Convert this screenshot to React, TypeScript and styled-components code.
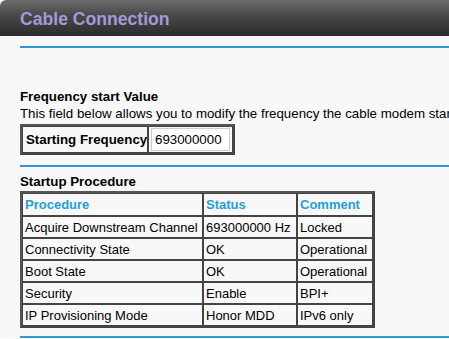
import React from "react";
import styled, { createGlobalStyle } from "styled-components";

const Global = createGlobalStyle`
  html, body { margin: 0; padding: 0; background: #ffffff; }
  body { font-family: "Liberation Sans", Arial, sans-serif; color: #000; overflow: hidden; }
`;

const Page = styled.div`
  width: 449px;
  height: 339px;
  overflow: hidden;
  background: #ffffff;
`;

const Header = styled.div`
  height: 36px;
  box-sizing: border-box;
  border-top-left-radius: 6px;
  background: linear-gradient(#6c6c6c 0%, #4a4a4a 40%, #2b2b2b 100%);
  display: flex;
  align-items: center;
  padding: 3px 0 0 20px;
`;

const Title = styled.h1`
  margin: 0;
  font-size: 17.6px;
  font-weight: bold;
  color: #a29bd9;
  letter-spacing: 0;
`;

const Content = styled.div`
  padding-left: 20px;
  background: #f8f8f8;
  display: flex;
  flex-direction: column;
  align-items: flex-start;
`;

const Rule = styled.div<{ $top: number }>`
  align-self: stretch;
  height: 2px;
  background: #2b9ad3;
  margin-top: ${(p) => p.$top}px;
`;

const Heading = styled.div<{ $top: number }>`
  margin-top: ${(p) => p.$top}px;
  font-size: 13.3px;
  font-weight: bold;
  line-height: 15px;
  white-space: nowrap;
`;

const Para = styled.div`
  font-size: 13.3px;
  line-height: 15px;
  margin-top: 2px;
  white-space: nowrap;
`;

const Table = styled.table<{ $top: number; $width: number }>`
  margin-top: ${(p) => p.$top}px;
  width: ${(p) => p.$width}px;
  border-collapse: separate;
  border-spacing: 0;
  border: 2px solid #555;
  border-right-color: #444;
  border-bottom-color: #444;
  font-size: 13px;
  background: #f8f8f8;
  table-layout: fixed;
`;

const Cell = styled.td<{
  $w?: number;
  $h?: number;
  $bold?: boolean;
  $head?: boolean;
  $pad?: number;
  $size?: number;
}>`
  border: 1px solid #444;
  padding: 0 ${(p) => p.$pad ?? 2}px;
  height: ${(p) => p.$h ?? 22}px;
  box-sizing: border-box;
  white-space: nowrap;
  overflow: hidden;
  ${(p) => (p.$w ? `width: ${p.$w}px;` : "")}
  ${(p) => (p.$size ? `font-size: ${p.$size}px;` : "")}
  font-weight: ${(p) => (p.$bold || p.$head ? "bold" : "normal")};
  color: ${(p) => (p.$head ? "#1ea0dc" : "#000")};
`;

const InputBox = styled.div`
  border: 1px solid #ccc;
  background: #fff;
  padding: 3px 3px;
  font-size: 13.3px;
  line-height: 15px;
`;

const rows = [
  ["Acquire Downstream Channel", "693000000 Hz", "Locked"],
  ["Connectivity State", "OK", "Operational"],
  ["Boot State", "OK", "Operational"],
  ["Security", "Enable", "BPI+"],
  ["IP Provisioning Mode", "Honor MDD", "IPv6 only"],
];

export default function App() {
  return (
    <Page>
      <Global />
      <Header>
        <Title>Cable Connection</Title>
      </Header>
      <Content>
        <Rule $top={10} />
        <Heading $top={41}>Frequency start Value</Heading>
        <Para>This field below allows you to modify the frequency the cable modem starts its scan</Para>
        <Table $top={3} $width={215}>
          <tbody>
            <tr>
              <Cell $bold $w={126} $h={27} $pad={3} $size={13.3}>Starting Frequency</Cell>
              <Cell $w={85} $pad={2}>
                <InputBox>693000000</InputBox>
              </Cell>
            </tr>
          </tbody>
        </Table>
        <Rule $top={10} />
        <Heading $top={7}>Startup Procedure</Heading>
        <Table $top={2} $width={355}>
          <tbody>
            <tr>
              <Cell $head $w={181} $h={23}>Procedure</Cell>
              <Cell $head $w={94} $h={23}>Status</Cell>
              <Cell $head $w={76} $h={23}>Comment</Cell>
            </tr>
            {rows.map((r) => (
              <tr key={r[0]}>
                <Cell>{r[0]}</Cell>
                <Cell>{r[1]}</Cell>
                <Cell>{r[2]}</Cell>
              </tr>
            ))}
          </tbody>
        </Table>
        <Rule $top={8} />
      </Content>
    </Page>
  );
}
